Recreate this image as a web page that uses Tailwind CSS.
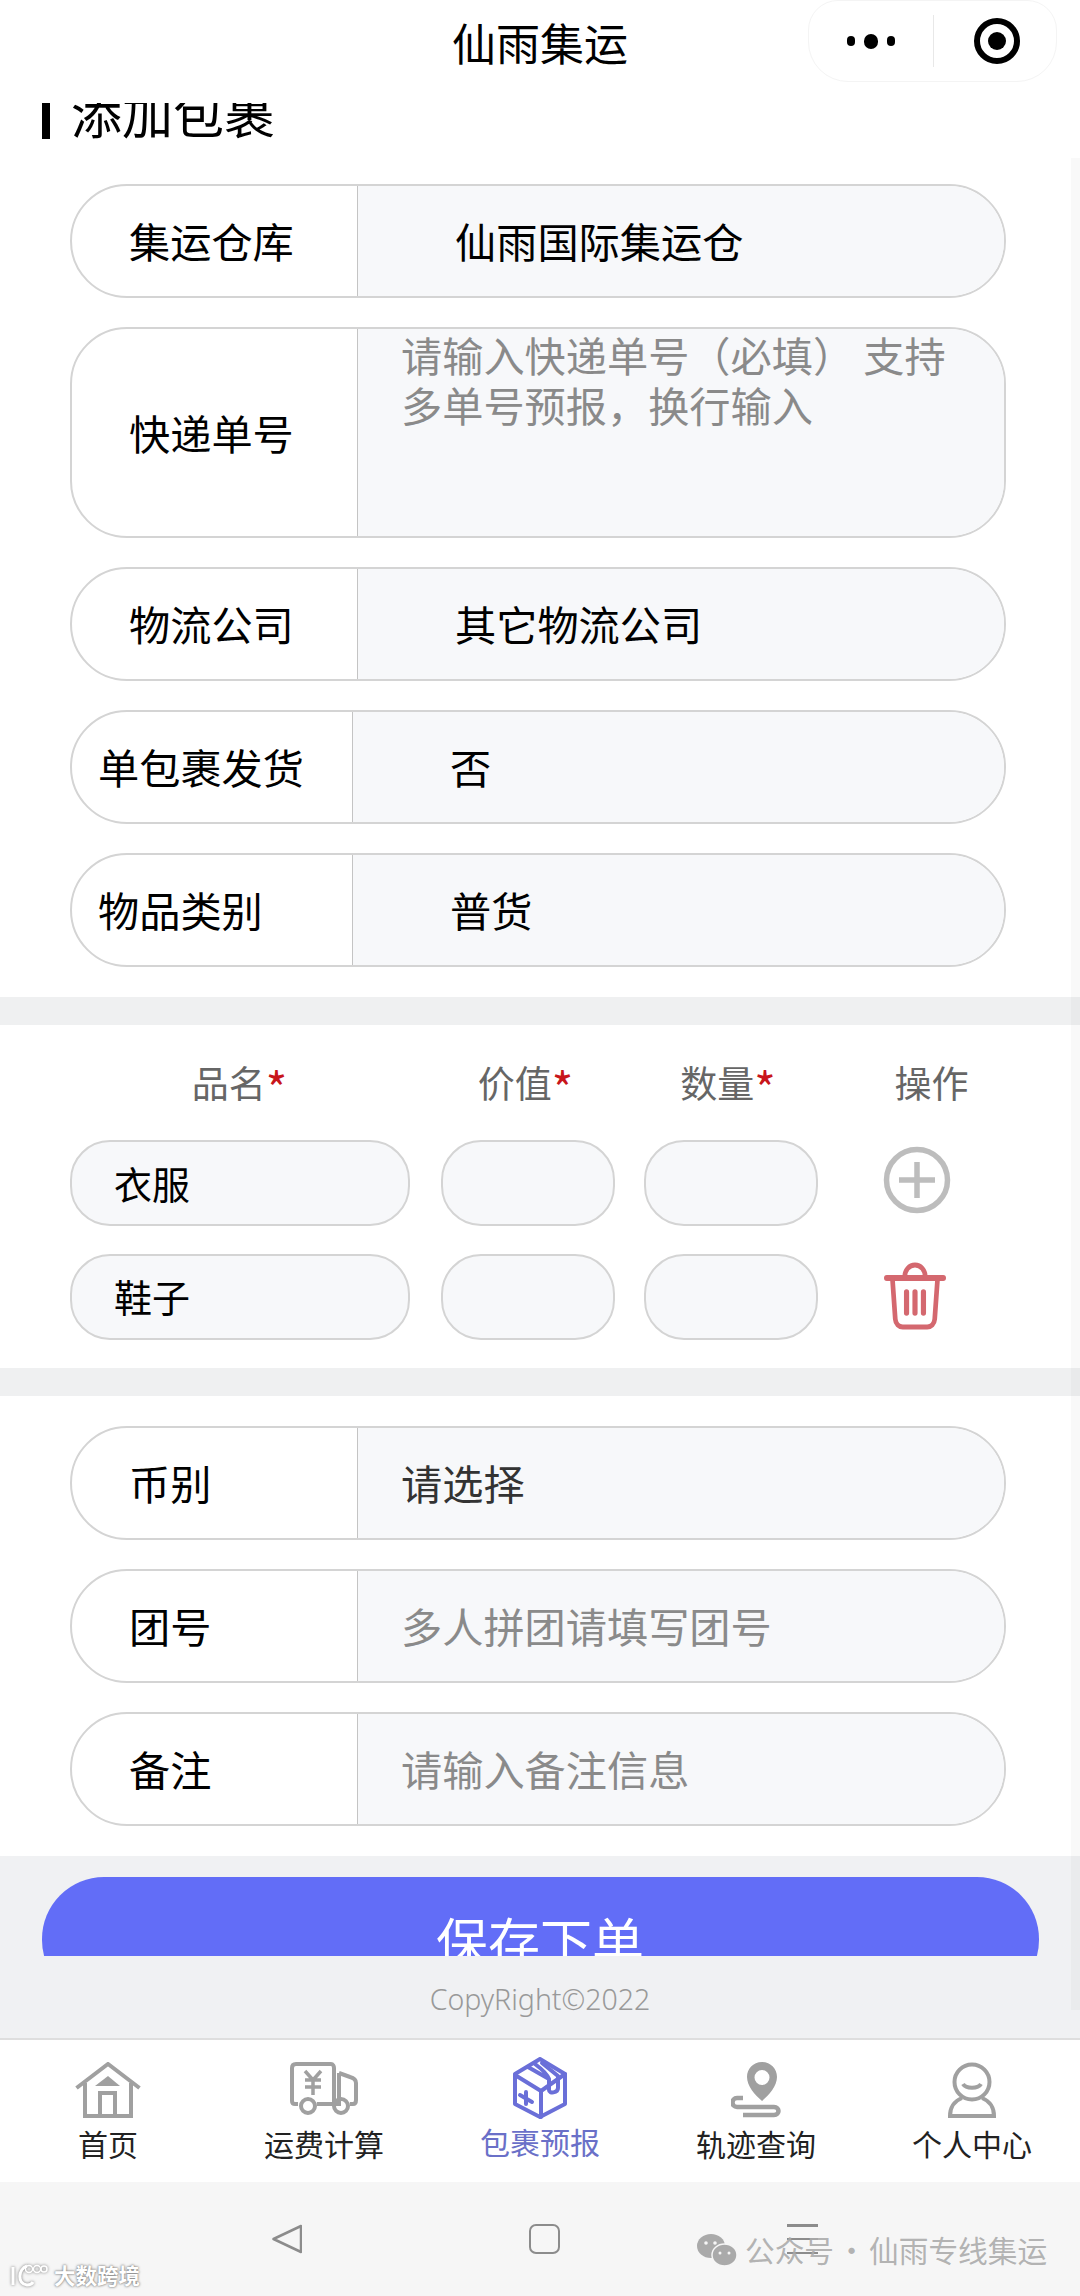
<!DOCTYPE html>
<html lang="zh-CN">
<head>
    <meta charset="UTF-8">
    <meta name="viewport" content="width=device-width, initial-scale=1.0">
    <script src="https://cdn.jsdelivr.net/npm/@tailwindcss/browser@4"></script>
    <title>仙雨集运</title>
</head>
<body class="font-['Noto_Sans_CJK_SC','Noto_Sans',sans-serif]">
<div class="relative w-[1080px] h-[2296px] overflow-hidden bg-white flex flex-col text-black">

    <!-- top bar -->
    <header class="relative h-[103px] shrink-0 flex justify-center pt-[12px]">
        <h1 class="text-[44px] leading-[60px] font-normal">仙雨集运</h1>
        <div class="absolute right-[23px] top-0 w-[249px] h-[82px] rounded-b-[40px] rounded-t-[30px] border border-[#f4f4f4] flex items-center">
            <div class="w-[124px] flex items-center justify-end gap-[9px] pr-[38px]">
                <span class="w-[8px] h-[10px] rounded-full bg-black"></span>
                <span class="w-[14px] h-[15px] rounded-full bg-black"></span>
                <span class="w-[8px] h-[10px] rounded-full bg-black"></span>
            </div>
            <div class="w-px h-[52px] bg-[#e8e8e8]"></div>
            <div class="ml-[40px] w-[46px] h-[46px] rounded-full border-[6px] border-black flex items-center justify-center">
                <span class="w-[18px] h-[18px] rounded-full bg-black"></span>
            </div>
        </div>
    </header>

    <!-- 添加包裹, the page is scrolled so its top runs under the bar -->
    <div class="h-[36px] shrink-0 overflow-hidden flex items-end pl-[42px] gap-[21px]">
        <span class="w-[8px] h-[36px] bg-black"></span>
        <h2 class="text-[51px] leading-[60px] -mb-[3px] font-normal">添加包裹</h2>
    </div>

    <section class="pt-[45px] pb-[30px] pl-[70px] pr-[74px] flex flex-col gap-[29px] text-[41.2px] shrink-0">
        <div class="h-[114px] flex rounded-[57px] border-2 border-[#d4d4d4] overflow-hidden">
            <div class="w-[286px] shrink-0 flex items-center pl-[57px] border-r border-[#c4c4c4]">集运仓库</div>
            <div class="flex-1 bg-[#f7f8fa] flex items-center pl-[97px]">仙雨国际集运仓</div>
        </div>
        <div class="h-[211px] flex rounded-[57px] border-2 border-[#d4d4d4] overflow-hidden">
            <div class="w-[286px] shrink-0 flex items-center pl-[57px] border-r border-[#c4c4c4]">快递单号</div>
            <div class="flex-1 bg-[#f7f8fa] pl-[43px] pr-[30px] leading-[50px] text-[#8a8a8a]">请输入快递单号（必填） 支持多单号预报，换行输入</div>
        </div>
        <div class="h-[114px] flex rounded-[57px] border-2 border-[#d4d4d4] overflow-hidden">
            <div class="w-[286px] shrink-0 flex items-center pl-[57px] border-r border-[#c4c4c4]">物流公司</div>
            <div class="flex-1 bg-[#f7f8fa] flex items-center pl-[97px]">其它物流公司</div>
        </div>
        <div class="h-[114px] flex rounded-[57px] border-2 border-[#d4d4d4] overflow-hidden">
            <div class="w-[281px] shrink-0 flex items-center pl-[26px] border-r border-[#c4c4c4]">单包裹发货</div>
            <div class="flex-1 bg-[#f7f8fa] flex items-center pl-[97px]">否</div>
        </div>
        <div class="h-[114px] flex rounded-[57px] border-2 border-[#d4d4d4] overflow-hidden">
            <div class="w-[281px] shrink-0 flex items-center pl-[26px] border-r border-[#c4c4c4]">物品类别</div>
            <div class="flex-1 bg-[#f7f8fa] flex items-center pl-[97px]">普货</div>
        </div>
    </section>

    <div class="h-[28px] shrink-0 bg-[#eff0f1]"></div>

    <!-- goods table -->
    <section class="pl-[70px] pb-[28px] shrink-0 grid grid-cols-[342px_174px_174px_174px] gap-x-[29px]">
        <div class="h-[115px] flex items-center justify-center pr-[3px] text-[37px] text-[#666]">品名<span class="text-[#c8151b] text-[46px] leading-none mt-[8px]">*</span></div>
        <div class="h-[115px] flex items-center justify-center pr-[5px] text-[37px] text-[#666]">价值<span class="text-[#c8151b] text-[46px] leading-none mt-[8px]">*</span></div>
        <div class="h-[115px] flex items-center justify-center pr-[6px] text-[37px] text-[#666]">数量<span class="text-[#c8151b] text-[46px] leading-none mt-[8px]">*</span></div>
        <div class="h-[115px] flex items-center justify-center pr-[5px] text-[37px] text-[#666]">操作</div>

        <div class="w-[340px] h-[86px] rounded-[40px] border-2 border-[#d4d4d4] bg-[#f7f8fa] flex items-center pl-[42px] pb-[2px] text-[38px]">衣服</div>
        <div class="h-[86px] rounded-[40px] border-2 border-[#d4d4d4] bg-[#f7f8fa]"></div>
        <div class="h-[86px] rounded-[40px] border-2 border-[#d4d4d4] bg-[#f7f8fa]"></div>
        <div class="h-[86px] flex items-center pl-[36px] pb-[6px]">
            <svg class="w-[68px] h-[68px]" viewBox="0 0 68 68" fill="none" stroke="#bdbdbd" stroke-width="5.5"><circle cx="34" cy="34" r="30.5"/><path d="M16 34h36M34 16v36"/></svg>
        </div>

        <div class="w-[340px] mt-[28px] h-[86px] rounded-[40px] border-2 border-[#d4d4d4] bg-[#f7f8fa] flex items-center pl-[42px] pb-[4px] text-[38px]">鞋子</div>
        <div class="mt-[28px] h-[86px] rounded-[40px] border-2 border-[#d4d4d4] bg-[#f7f8fa]"></div>
        <div class="mt-[28px] h-[86px] rounded-[40px] border-2 border-[#d4d4d4] bg-[#f7f8fa]"></div>
        <div class="mt-[28px] h-[86px] flex items-center pl-[37px] pb-[2px]">
            <svg class="w-[62px] h-[68px]" viewBox="0 0 66 68" preserveAspectRatio="none" fill="none" stroke="#d4686f" stroke-width="5" stroke-linecap="round"><path d="M3 16h60" stroke-width="6"/><path d="M22 15c0-7 5-12 11-12s11 5 11 12"/><path d="M9 17l3 40c.4 5 4 8 8 8h26c4 0 7.600-3 8-8l3-40"/><path d="M24 30v21M33 30v21M42 30v21" stroke-width="5.500"/></svg>
        </div>
    </section>

    <div class="h-[28px] shrink-0 bg-[#eff0f1]"></div>

    <section class="pt-[30px] pb-[30px] pl-[70px] pr-[74px] flex flex-col gap-[29px] text-[41.2px] shrink-0">
        <div class="h-[114px] flex rounded-[57px] border-2 border-[#d4d4d4] overflow-hidden">
            <div class="w-[286px] shrink-0 flex items-center pl-[57px] border-r border-[#c4c4c4]">币别</div>
            <div class="flex-1 bg-[#f7f8fa] flex items-center pl-[43px] text-[#333]">请选择</div>
        </div>
        <div class="h-[114px] flex rounded-[57px] border-2 border-[#d4d4d4] overflow-hidden">
            <div class="w-[286px] shrink-0 flex items-center pl-[57px] border-r border-[#c4c4c4]">团号</div>
            <div class="flex-1 bg-[#f7f8fa] flex items-center pl-[43px] text-[#8a8a8a]">多人拼团请填写团号</div>
        </div>
        <div class="h-[114px] flex rounded-[57px] border-2 border-[#d4d4d4] overflow-hidden">
            <div class="w-[286px] shrink-0 flex items-center pl-[57px] border-r border-[#c4c4c4]">备注</div>
            <div class="flex-1 bg-[#f7f8fa] flex items-center pl-[43px] text-[#8a8a8a]">请输入备注信息</div>
        </div>
    </section>

    <!-- footer with clipped save button -->
    <section class="h-[182px] shrink-0 bg-[#f0f1f3] pt-[21px] flex flex-col items-center">
        <div class="w-[997px] h-[79px] overflow-hidden">
            <div class="h-[125px] rounded-[62px] bg-[#626df7] text-white text-[52px] flex items-center justify-center">保存下单</div>
        </div>
        <p class="mt-[25px] text-[28.5px] leading-[36px] text-[#999] font-['Noto_Sans',sans-serif] font-light">CopyRight©2022</p>
    </section>

    <!-- tab bar -->
    <nav class="h-[144px] shrink-0 border-t-2 border-[#dedede] grid grid-cols-5 text-[30px] leading-[36px] text-[#222]">
        <div class="flex flex-col items-center pt-[22px]">
            <svg class="w-[66px] h-[56px]" viewBox="0 0 66 56" fill="none" stroke="#a0a0a0" stroke-width="4"><path d="M1.500 26L33 2l31.500 24"/><path d="M10 21v33h46V21"/><path d="M25 54V31h15v23"/><path d="M33 14l12 10H20z" fill="#a0a0a0" stroke="none"/></svg>
            <span class="mt-[7px]">首页</span>
        </div>
        <div class="flex flex-col items-center pt-[22px]">
            <svg class="w-[68px] h-[56px]" viewBox="0 0 68 56" fill="none" stroke="#a0a0a0" stroke-width="4"><path d="M8 42H5c-2 0-3-1-3-3V6c0-2 1-4 4-4h35c2 0 3 2 3 4v36H27"/><path d="M49 11l11 4c4 1 6 3 6 6v17c0 3-1 4-3 4h-3M49 11v31h-6"/><circle cx="18" cy="44" r="7"/><circle cx="51" cy="44" r="7"/><path d="M15 9l8 9 8-9M15 18h16M15 25h16M23 18v15" stroke-width="3.500"/></svg>
            <span class="mt-[7px]">运费计算</span>
        </div>
        <div class="flex flex-col items-center pt-[17px] text-[#6a70c8]">
            <svg class="w-[54px] h-[62px]" viewBox="0 0 54 62" fill="none" stroke="#6a6fd8" stroke-width="4" stroke-linejoin="round" stroke-linecap="round"><path d="M27 2l25 15v30L27 60 2 47V17z"/><path d="M2 18l26 16 24-17M28 34v26"/><path d="M15 10l21 12v0M36 22c-2-6-10-12-14-15M36 22v11c0 4 9 3 9-2V19L29 6"/><path d="M7 38l12 7M13 35l0 12" stroke-width="4"/></svg>
            <span class="mt-[4px]">包裹预报</span>
        </div>
        <div class="flex flex-col items-center pt-[22px]">
            <svg class="w-[50px] h-[56px]" viewBox="0 0 50 56" fill="none" stroke="#a0a0a0" stroke-width="4"><path fill-rule="evenodd" fill="#a0a0a0" stroke="none" d="M31 0c9 0 15 7 15 15 0 9-8 18-15 24-7-6-15-15-15-24C16 7 22 0 31 0zm0 8a7.500 7.500 0 100 15 7.500 7.500 0 000-15z"/><path d="M12 36H6c-6 0-6 9 0 9h37c6 0 6 8 0 8H12" stroke-width="4.500"/></svg>
            <span class="mt-[7px]">轨迹查询</span>
        </div>
        <div class="flex flex-col items-center pt-[22px]">
            <svg class="w-[48px] h-[56px]" viewBox="0 0 48 56" fill="none" stroke="#a0a0a0" stroke-width="4"><circle cx="24" cy="20" r="17.500"/><path d="M15 22c3 5 15 5 18 0"/><path d="M14 36C6 39 2 46 2 54h44c0-8-4-15-12-18"/></svg>
            <span class="mt-[7px]">个人中心</span>
        </div>
    </nav>

    <!-- android nav bar -->
    <div class="flex-1 bg-[#f6f6f6] flex items-start pt-[42px] pl-[272px] gap-[227px]">
        <svg class="w-[30px] h-[30px]" viewBox="0 0 30 30" fill="none" stroke="#8c8c8c" stroke-width="2.500" stroke-linejoin="round"><path d="M29 2v26L1.500 15z"/></svg>
        <div class="w-[31px] h-[30px] rounded-[7px] border-[2.5px] border-[#8c8c8c]"></div>
        <div class="w-[31px] h-[30px] flex flex-col justify-between">
            <span class="h-[2.5px] bg-[#8c8c8c]"></span>
            <span class="h-[2.5px] bg-[#8c8c8c]"></span>
            <span class="h-[2.5px] bg-[#8c8c8c]"></span>
        </div>
    </div>

    <!-- scrollbar strip -->
    <div class="absolute right-0 top-[158px] w-[9px] h-[1852px] bg-black/[0.025]"></div>

    <!-- watermarks -->
    <div class="absolute left-[697px] top-[2229px] flex items-center gap-[8px] text-[29.7px] leading-[42px] text-[#aaa]/90">
        <svg class="w-[40px] h-[33px]" viewBox="0 0 40 33"><ellipse cx="14" cy="12" rx="14" ry="12" fill="#aaa"/><ellipse cx="27.500" cy="21" rx="12.500" ry="11" fill="#aaa" stroke="#f6f6f6" stroke-width="1.500"/><circle cx="9" cy="9" r="1.800" fill="#f6f6f6"/><circle cx="18" cy="9" r="1.800" fill="#f6f6f6"/><circle cx="23" cy="19" r="1.500" fill="#f6f6f6"/><circle cx="32" cy="19" r="1.500" fill="#f6f6f6"/></svg>
        <span class="[word-spacing:-4px]">公众号 · 仙雨专线集运</span>
    </div>
    <div class="absolute left-[10px] top-[2260px] flex items-center gap-[6px] text-white font-bold [text-shadow:0_0_2px_#777,0_0_3px_#999]">
        <svg class="w-[38px] h-[24px] drop-shadow-[0_0_1.5px_#777]" viewBox="0 0 38 24" fill="none" stroke="#fff" stroke-width="3"><path d="M3 4v18M17 3C8 6 7 21 17 22c3 0 5-1 6-3"/><circle cx="19" cy="6" r="3.500" stroke-width="1.500"/><circle cx="27" cy="6" r="3.500" stroke-width="1.500"/><circle cx="34" cy="6" r="3" stroke-width="1.500"/></svg>
        <span class="text-[21.5px] leading-[30px]">大数跨境</span>
    </div>
</div>
</body>
</html>
